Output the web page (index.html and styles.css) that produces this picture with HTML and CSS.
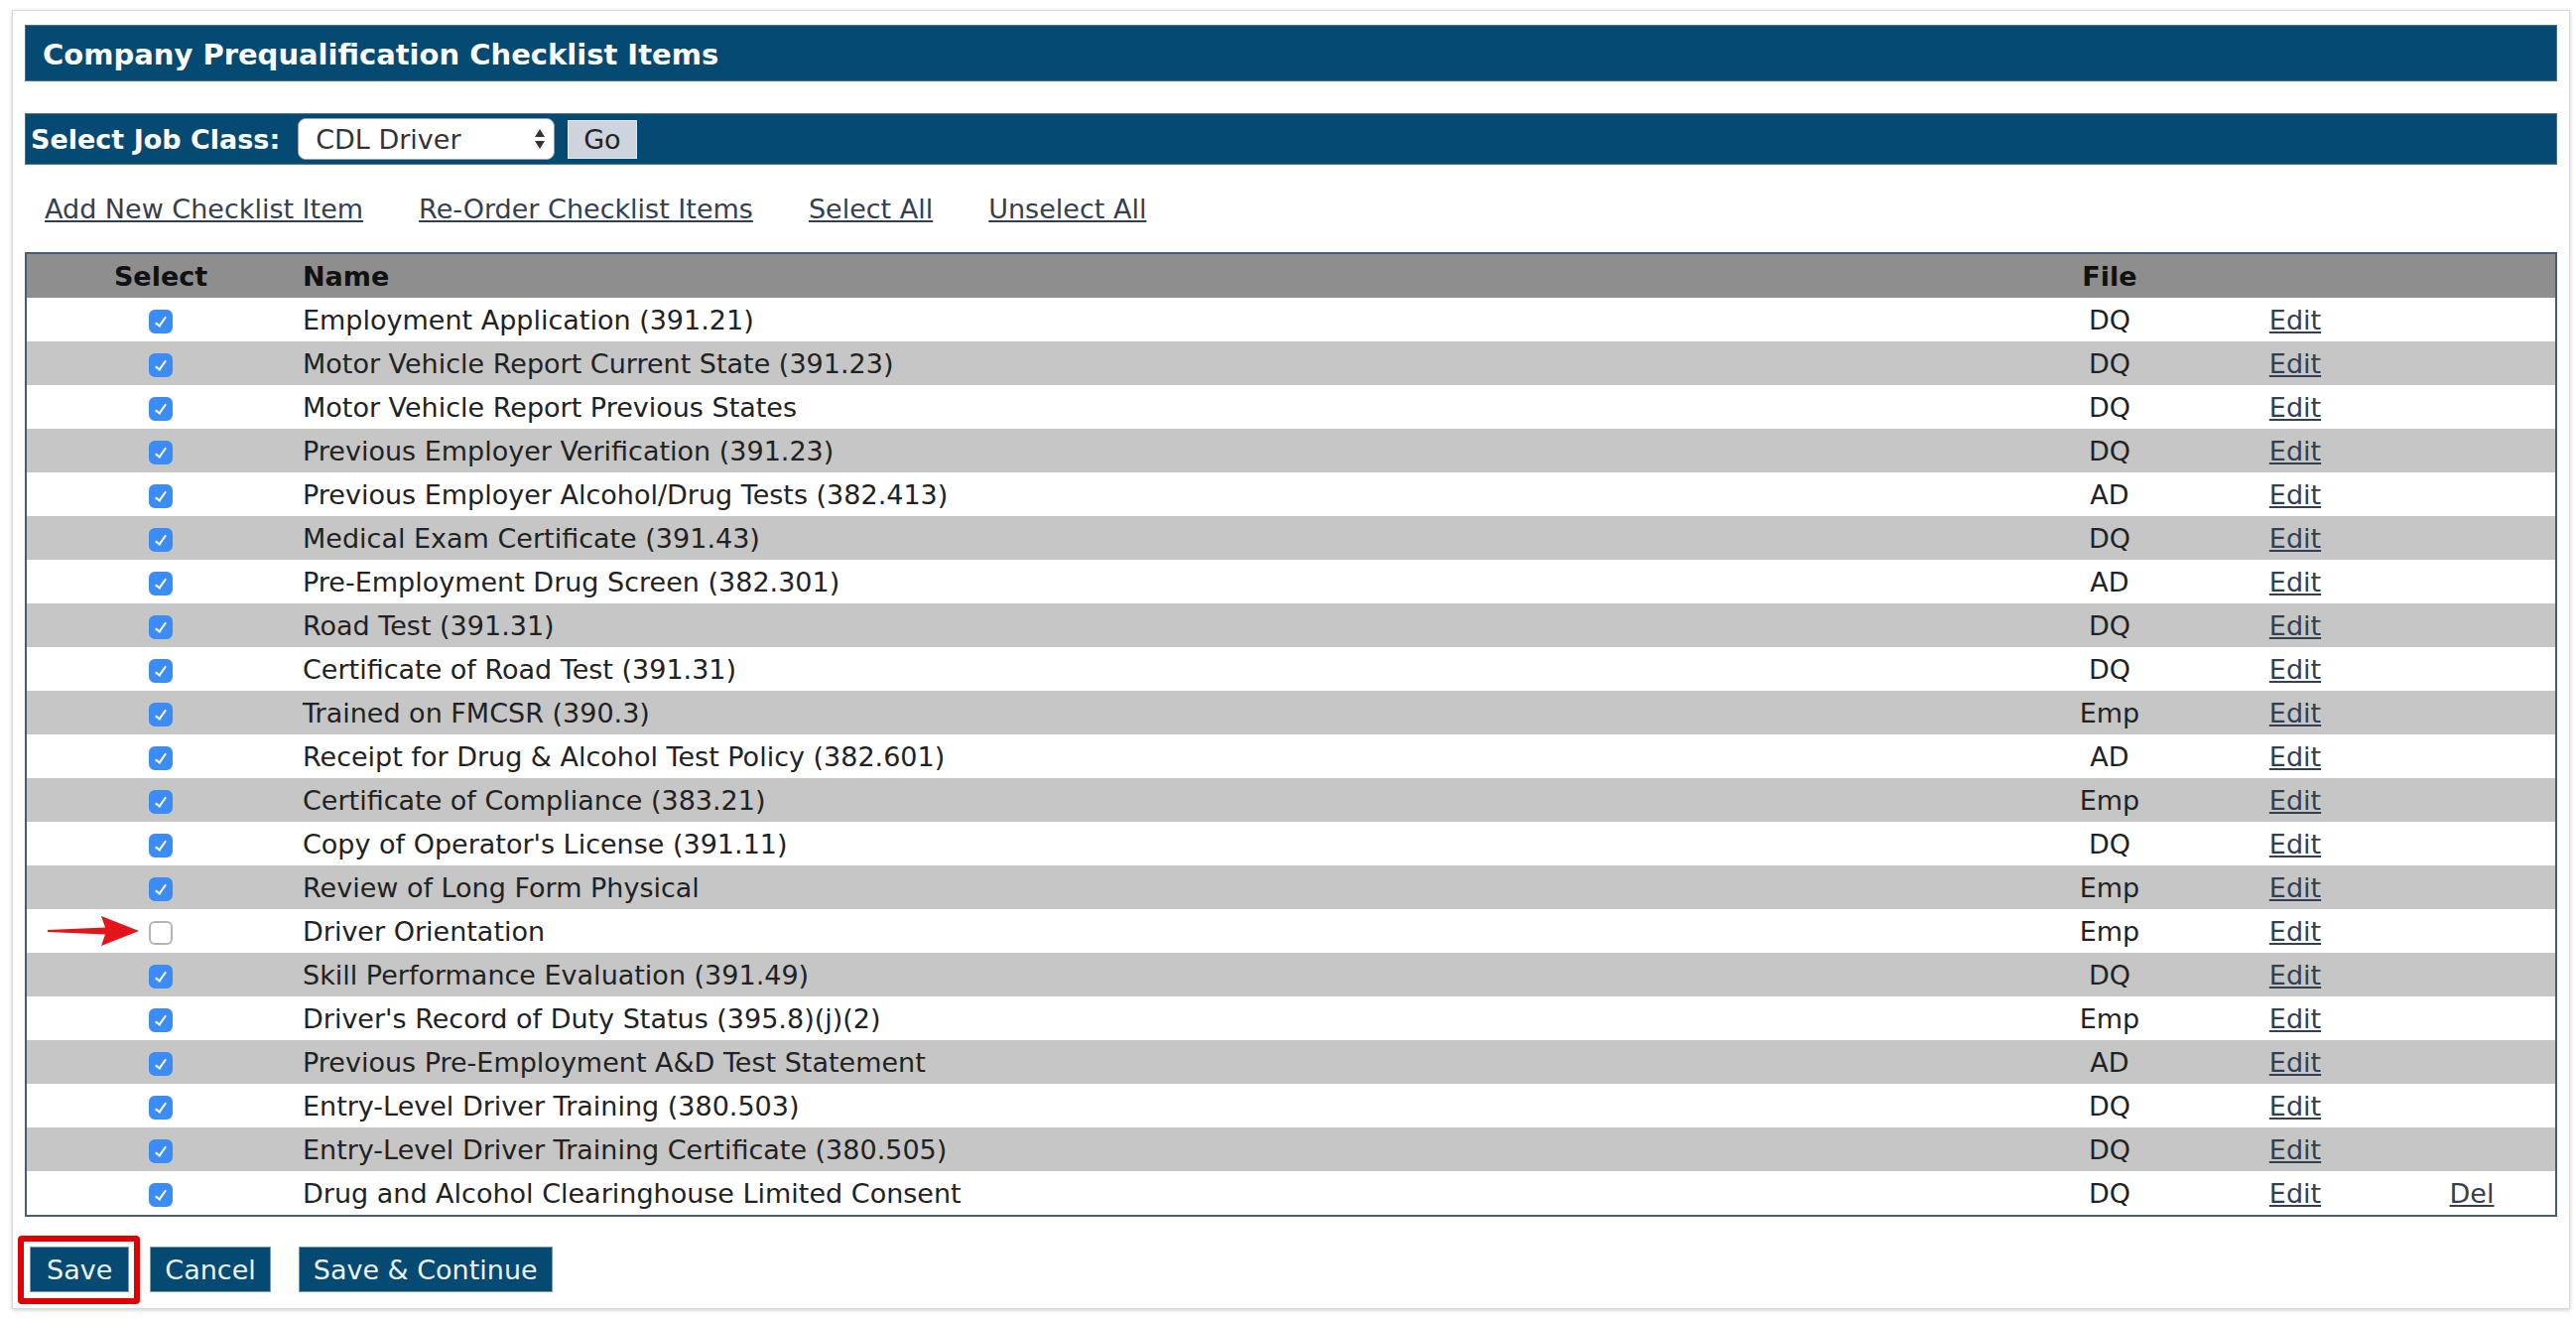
FILE: index.html
```html
<!DOCTYPE html>
<html>
  <head>
    <meta name="viewport" content="width=device-width, initial-scale=1.0" />
    <link rel="stylesheet" href="styles.css">
  </head>
  <body>
    <div class="panel">
      <div class="title-bar">Company Prequalification Checklist Items</div>

      <form class="job-bar">
        <label for="jobClass">Select Job Class:</label>
        <span class="select-wrap">
          <select id="jobClass">
            <option>CDL Driver</option>
            <option>Non-CDL Driver</option>
            <option>Mechanic</option>
          </select>
          <svg class="select-arrows" width="12" height="22" viewBox="0 0 12 22">
            <path d="M6 1 L11 9 L1 9 Z" fill="#333" />
            <path d="M6 21 L11 13 L1 13 Z" fill="#333" />
          </svg>
        </span>
        <button type="button" class="go">Go</button>
      </form>

      <div class="links">
        <a href="#">Add New Checklist Item</a>
        <a href="#">Re-Order Checklist Items</a>
        <a href="#">Select All</a>
        <a href="#">Unselect All</a>
      </div>

      <table class="checklist">
        <colgroup>
          <col class="c-select" />
          <col />
          <col class="c-file" />
          <col class="c-edit" />
          <col class="c-del" />
        </colgroup>
        <thead>
          <tr>
            <th class="center">Select</th>
            <th>Name</th>
            <th class="center">File</th>
            <th></th>
            <th></th>
          </tr>
        </thead>
        <tbody>
          <tr><td class="center"><input type="checkbox" checked /></td><td>Employment Application (391.21)</td><td class="center">DQ</td><td class="center"><a href="#">Edit</a></td><td></td></tr>
          <tr><td class="center"><input type="checkbox" checked /></td><td>Motor Vehicle Report Current State (391.23)</td><td class="center">DQ</td><td class="center"><a href="#">Edit</a></td><td></td></tr>
          <tr><td class="center"><input type="checkbox" checked /></td><td>Motor Vehicle Report Previous States</td><td class="center">DQ</td><td class="center"><a href="#">Edit</a></td><td></td></tr>
          <tr><td class="center"><input type="checkbox" checked /></td><td>Previous Employer Verification (391.23)</td><td class="center">DQ</td><td class="center"><a href="#">Edit</a></td><td></td></tr>
          <tr><td class="center"><input type="checkbox" checked /></td><td>Previous Employer Alcohol/Drug Tests (382.413)</td><td class="center">AD</td><td class="center"><a href="#">Edit</a></td><td></td></tr>
          <tr><td class="center"><input type="checkbox" checked /></td><td>Medical Exam Certificate (391.43)</td><td class="center">DQ</td><td class="center"><a href="#">Edit</a></td><td></td></tr>
          <tr><td class="center"><input type="checkbox" checked /></td><td>Pre-Employment Drug Screen (382.301)</td><td class="center">AD</td><td class="center"><a href="#">Edit</a></td><td></td></tr>
          <tr><td class="center"><input type="checkbox" checked /></td><td>Road Test (391.31)</td><td class="center">DQ</td><td class="center"><a href="#">Edit</a></td><td></td></tr>
          <tr><td class="center"><input type="checkbox" checked /></td><td>Certificate of Road Test (391.31)</td><td class="center">DQ</td><td class="center"><a href="#">Edit</a></td><td></td></tr>
          <tr><td class="center"><input type="checkbox" checked /></td><td>Trained on FMCSR (390.3)</td><td class="center">Emp</td><td class="center"><a href="#">Edit</a></td><td></td></tr>
          <tr><td class="center"><input type="checkbox" checked /></td><td>Receipt for Drug &amp; Alcohol Test Policy (382.601)</td><td class="center">AD</td><td class="center"><a href="#">Edit</a></td><td></td></tr>
          <tr><td class="center"><input type="checkbox" checked /></td><td>Certificate of Compliance (383.21)</td><td class="center">Emp</td><td class="center"><a href="#">Edit</a></td><td></td></tr>
          <tr><td class="center"><input type="checkbox" checked /></td><td>Copy of Operator's License (391.11)</td><td class="center">DQ</td><td class="center"><a href="#">Edit</a></td><td></td></tr>
          <tr><td class="center"><input type="checkbox" checked /></td><td>Review of Long Form Physical</td><td class="center">Emp</td><td class="center"><a href="#">Edit</a></td><td></td></tr>
          <tr>
            <td class="center marked">
              <svg class="pointer" width="92" height="36" viewBox="0 0 92 36">
                <path d="M0 17 L58 14.5 L54 3 L92 18 L54 33 L58 21.5 L0 19 Z" fill="#e3151b" />
              </svg>
              <input type="checkbox" />
            </td>
            <td>Driver Orientation</td><td class="center">Emp</td><td class="center"><a href="#">Edit</a></td><td></td>
          </tr>
          <tr><td class="center"><input type="checkbox" checked /></td><td>Skill Performance Evaluation (391.49)</td><td class="center">DQ</td><td class="center"><a href="#">Edit</a></td><td></td></tr>
          <tr><td class="center"><input type="checkbox" checked /></td><td>Driver's Record of Duty Status (395.8)(j)(2)</td><td class="center">Emp</td><td class="center"><a href="#">Edit</a></td><td></td></tr>
          <tr><td class="center"><input type="checkbox" checked /></td><td>Previous Pre-Employment A&amp;D Test Statement</td><td class="center">AD</td><td class="center"><a href="#">Edit</a></td><td></td></tr>
          <tr><td class="center"><input type="checkbox" checked /></td><td>Entry-Level Driver Training (380.503)</td><td class="center">DQ</td><td class="center"><a href="#">Edit</a></td><td></td></tr>
          <tr><td class="center"><input type="checkbox" checked /></td><td>Entry-Level Driver Training Certificate (380.505)</td><td class="center">DQ</td><td class="center"><a href="#">Edit</a></td><td></td></tr>
          <tr><td class="center"><input type="checkbox" checked /></td><td>Drug and Alcohol Clearinghouse Limited Consent</td><td class="center">DQ</td><td class="center"><a href="#">Edit</a></td><td class="center del"><a href="#">Del</a></td></tr>
        </tbody>
      </table>

      <div class="actions">
        <span class="highlight"><button type="button" class="btn">Save</button></span>
        <button type="button" class="btn">Cancel</button>
        <button type="button" class="btn btn-continue">Save &amp; Continue</button>
      </div>
    </div>
  </body>
</html>
```

FILE: styles.css
```css
body {
  margin: 0;
  background: #fff;
  color: #222;
  font-family: "DejaVu Sans", Verdana, sans-serif;
  font-size: 27px;
}
.panel {
  margin: 10px 6px 10px 12px;
  padding: 14px 12px 16px 12px;
  border: 1px solid #d8d8d8;
  box-shadow: 0 1px 4px rgba(0, 0, 0, 0.2);
}
.title-bar {
  display: flex;
  align-items: center;
  box-sizing: border-box;
  height: 57px;
  padding: 2px 0 0 17px;
  background: #044a73;
  border: 1px solid #4f6e8b;
  color: #fff;
  font-size: 29px;
  font-weight: bold;
}
.job-bar {
  display: flex;
  align-items: center;
  height: 50px;
  margin: 32px 0 0;
  padding-left: 5px;
  background: #044a73;
  border: 1px solid #4f6e8b;
}
.job-bar label {
  color: #fff;
  font-weight: bold;
  margin-right: 18px;
}
.select-wrap {
  position: relative;
  display: inline-block;
}
.select-wrap select {
  appearance: none;
  -webkit-appearance: none;
  width: 259px;
  height: 42px;
  padding: 0 0 0 17px;
  border: 1px solid #9aa4ae;
  border-radius: 8px;
  background: #fff;
  color: #333;
  font-family: inherit;
  font-size: 27px;
}
.select-arrows {
  position: absolute;
  right: 9px;
  top: 10px;
  pointer-events: none;
}
.go {
  height: 39px;
  margin-left: 13px;
  padding: 0 15px;
  border: 1px solid #e6eaef;
  background: #cdd4de;
  color: #222;
  font-family: inherit;
  font-size: 27px;
}
.links {
  display: flex;
  align-items: center;
  gap: 56px;
  height: 88px;
  padding-left: 20px;
}
a {
  color: #34404f;
}
.checklist {
  width: 100%;
  table-layout: fixed;
  border-collapse: separate;
  border-spacing: 0;
  border: 2px solid #4b5b70;
}
.c-select {
  width: 270px;
}
.c-file {
  width: 140px;
}
.c-edit {
  width: 234px;
}
.c-del {
  width: 145px;
}
.checklist th,
.checklist td {
  height: 44px;
  padding: 0 0 0 8px;
  text-align: left;
  white-space: nowrap;
}
.checklist th {
  background: #8e8e8e;
  color: #111;
}
.checklist .center {
  padding: 0;
  text-align: center;
}
.checklist .del {
  padding-right: 23px;
}
.checklist tbody tr:nth-child(even) td {
  background: #c6c6c6;
}
.checklist input[type="checkbox"] {
  appearance: none;
  -webkit-appearance: none;
  position: relative;
  width: 24px;
  height: 24px;
  margin: 0;
  vertical-align: middle;
  border: 2px solid #b4b4b4;
  border-radius: 6px;
  background: #fff;
}
.checklist input[type="checkbox"]:checked {
  border-color: #3b8cf4;
  background: #3b8cf4;
}
.checklist input[type="checkbox"]:checked::after {
  content: "";
  position: absolute;
  left: 7px;
  top: 3px;
  width: 4px;
  height: 10px;
  border: solid #fff;
  border-width: 0 2px 2px 0;
  transform: rotate(35deg);
}
.marked {
  position: relative;
}
.pointer {
  position: absolute;
  left: 21px;
  top: 4px;
}
.actions {
  display: flex;
  align-items: center;
  margin-top: 30px;
  padding-left: 5px;
}
.btn {
  height: 46px;
  padding: 0 14px;
  border: 1px solid #8199b0;
  background: #044a73;
  color: #eef2f6;
  font-family: inherit;
  font-size: 27px;
}
.highlight {
  position: relative;
  display: inline-block;
  margin-right: 21px;
}
.highlight .btn {
  display: block;
  padding: 0 16px;
}
.highlight::after {
  content: "";
  position: absolute;
  top: -11px;
  right: -11px;
  bottom: -12px;
  left: -12px;
  border: 6px solid #e10000;
  border-radius: 4px;
}
.btn-continue {
  margin-left: 28px;
}
```
